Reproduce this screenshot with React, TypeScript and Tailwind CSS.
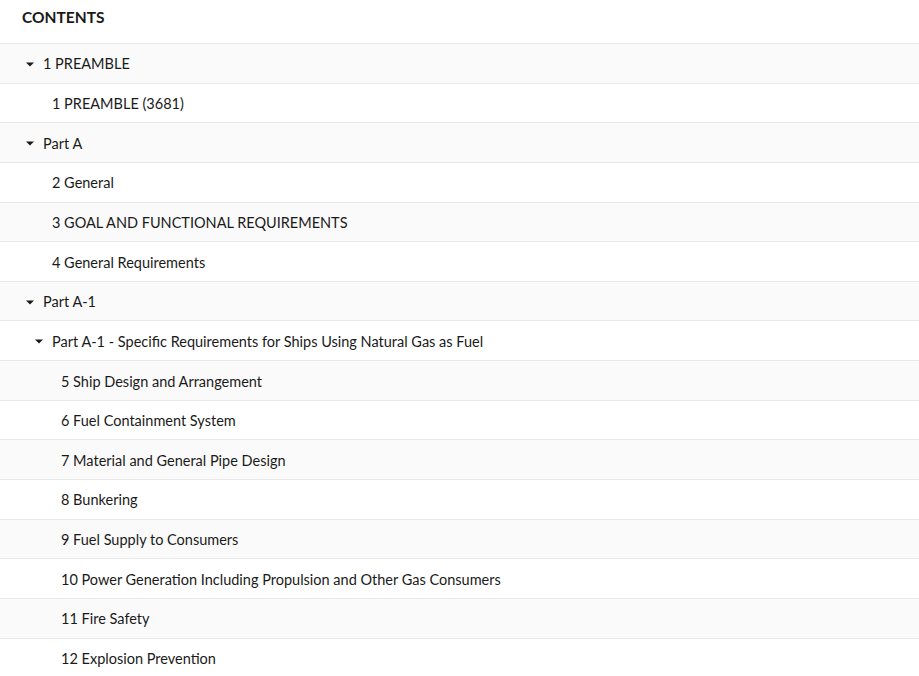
type Item = {
  label: string;
  level: number;
  caret?: boolean;
};

const items: Item[] = [
  { label: "1 PREAMBLE", level: 0, caret: true },
  { label: "1 PREAMBLE (3681)", level: 1 },
  { label: "Part A", level: 0, caret: true },
  { label: "2 General", level: 1 },
  { label: "3 GOAL AND FUNCTIONAL REQUIREMENTS", level: 1 },
  { label: "4 General Requirements", level: 1 },
  { label: "Part A-1", level: 0, caret: true },
  { label: "Part A-1 - Specific Requirements for Ships Using Natural Gas as Fuel", level: 1, caret: true },
  { label: "5 Ship Design and Arrangement", level: 2 },
  { label: "6 Fuel Containment System", level: 2 },
  { label: "7 Material and General Pipe Design", level: 2 },
  { label: "8 Bunkering", level: 2 },
  { label: "9 Fuel Supply to Consumers", level: 2 },
  { label: "10 Power Generation Including Propulsion and Other Gas Consumers", level: 2 },
  { label: "11 Fire Safety", level: 2 },
  { label: "12 Explosion Prevention", level: 2 },
];

const indent = ["pl-[26px]", "pl-[35px]", "pl-[44px]"];

function Caret() {
  return (
    <svg width="8" height="5" viewBox="0 0 8 5" className="mr-[9px] shrink-0">
      <path d="M0 0.5H8L4 4.5Z" fill="#1a1a1a" />
    </svg>
  );
}

export default function App() {
  return (
    <div className="w-[919px] bg-white text-[#1a1a1a]" style={{ fontFamily: "Lato, 'Noto Sans', sans-serif" }}>
      <div className="h-[44px] flex items-start pt-[6px] px-[22px] border-b border-[#e6e6e6]">
        <h2 className="text-[15.5px] font-bold">CONTENTS</h2>
      </div>
      <ul>
        {items.map((item, i) => (
          <li
            key={i}
            className={`h-[39.65px] pt-[2px] flex items-center border-b border-[#e9e9e9] text-[14.5px] ${
              i % 2 === 0 ? "bg-[#fafafa]" : "bg-white"
            } ${indent[item.level]}`}
          >
            {item.caret ? <Caret /> : <span className="w-[17px] shrink-0" />}
            <span>{item.label}</span>
          </li>
        ))}
      </ul>
    </div>
  );
}
